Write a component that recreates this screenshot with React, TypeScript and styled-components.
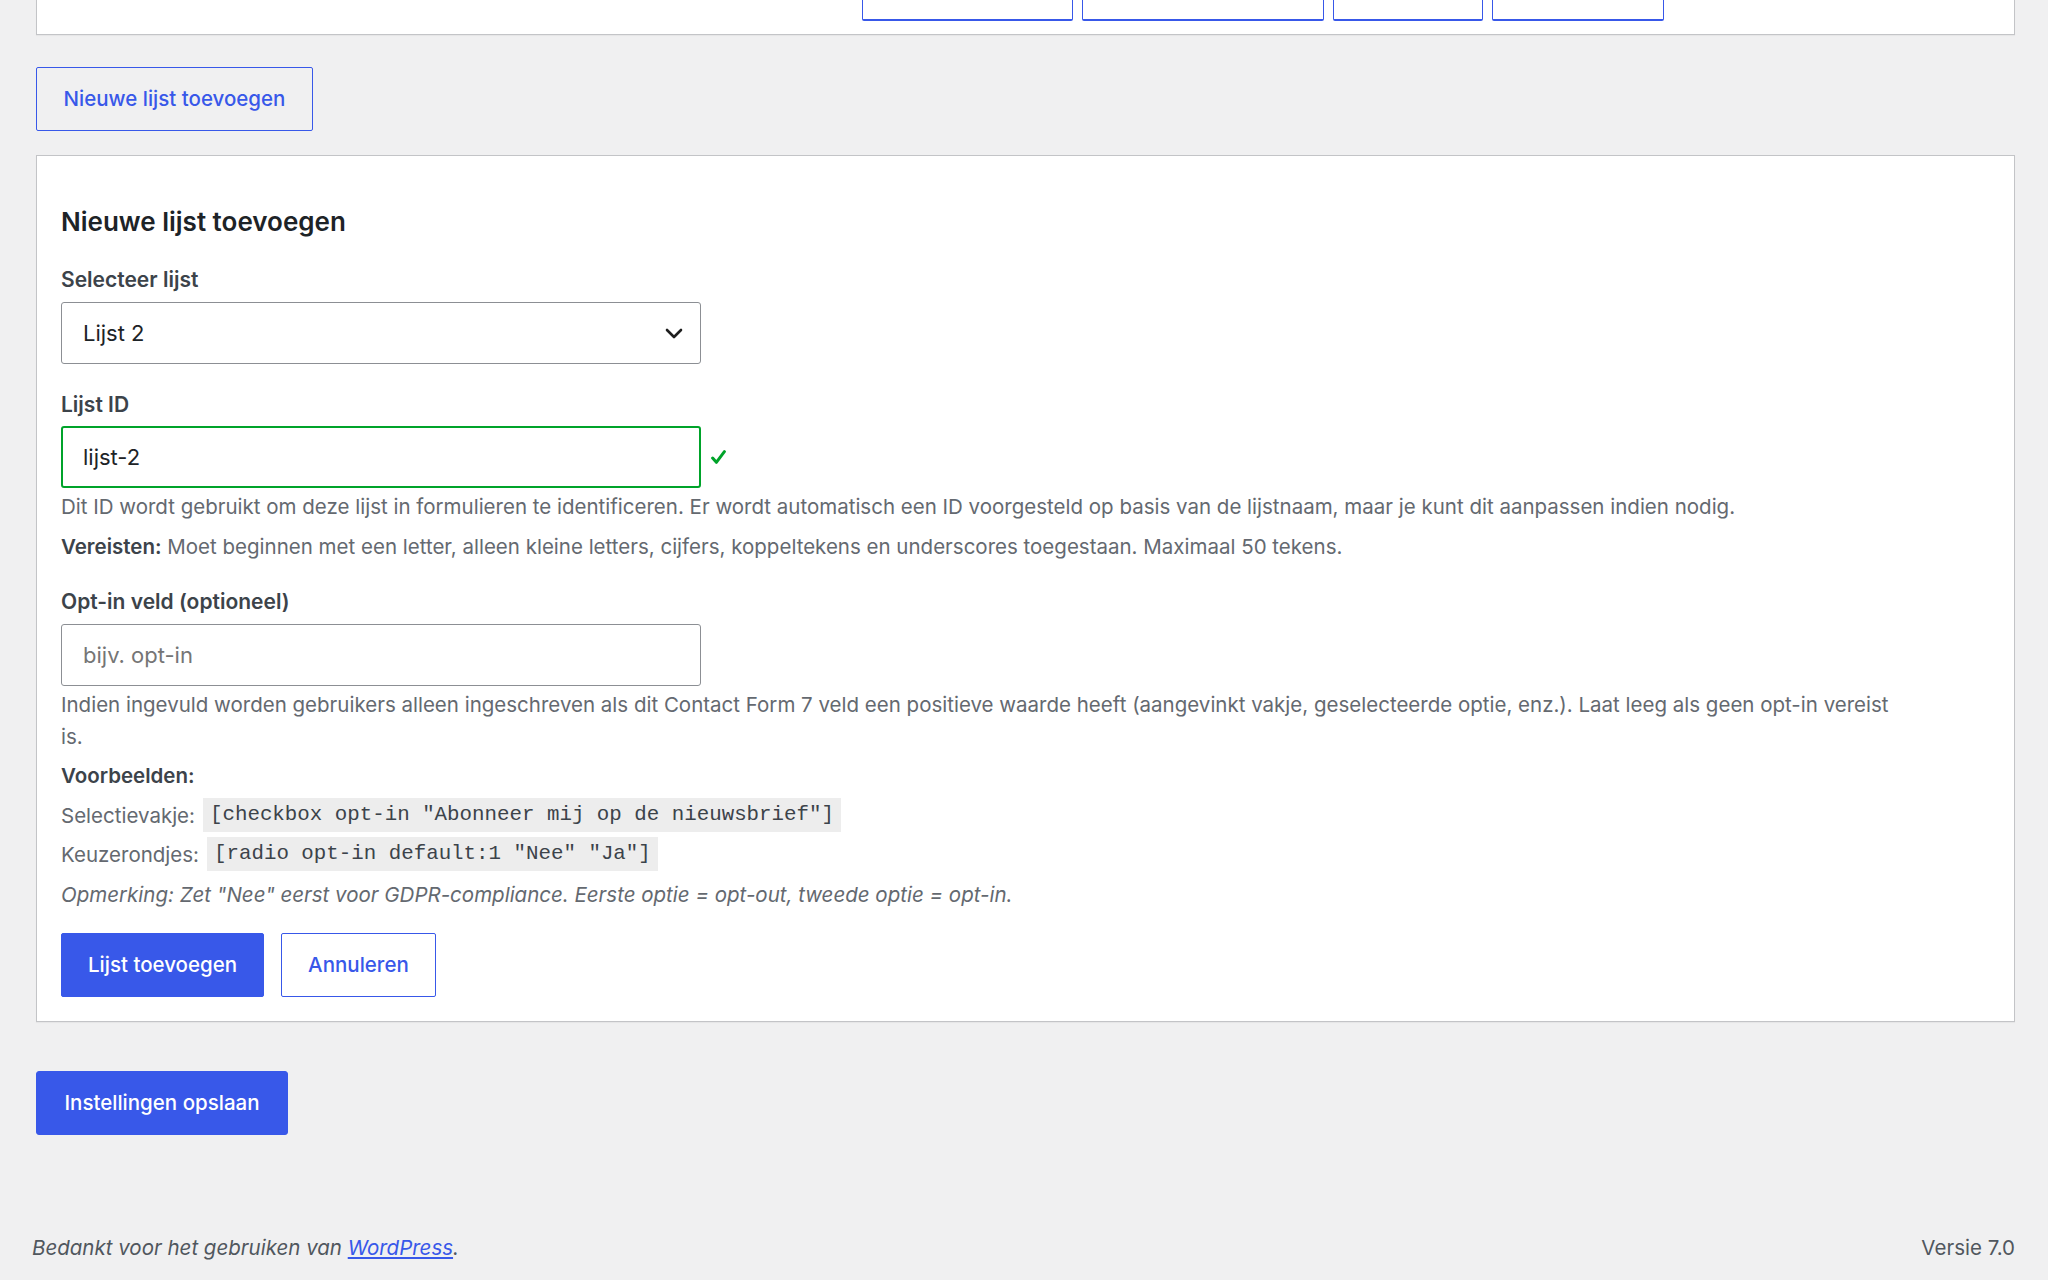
import styled, { createGlobalStyle } from "styled-components";

const GlobalStyle = createGlobalStyle`
  body {
    margin: 0;
    background: #f0f0f1;
    font-family: Inter, "Noto Sans", sans-serif;
    color: #3c434a;
  }
`;

const Page = styled.div`
  height: 1280px;
  overflow: hidden;
`;

const Wrap = styled.div`
  padding: 0 33px 0 36px;
`;

const TopPanel = styled.div`
  margin-top: -40px;
  height: 60px;
  background: #fff;
  border: 1px solid #c3c4c7;
  box-shadow: 0 1px 1px rgba(0, 0, 0, 0.04);
  display: flex;
  align-items: flex-end;
  gap: 9px;
  padding: 0 0 13px 825px;
`;

const TabStub = styled.div<{ $w: number }>`
  width: ${(p) => p.$w}px;
  height: 46px;
  box-sizing: border-box;
  background: #fff;
  border: 1px solid #3858e9;
  border-bottom-width: 2px;
  border-radius: 2px;
`;

const Button = styled.button<{ $primary?: boolean }>`
  height: 64px;
  box-sizing: border-box;
  padding: 0 26px 1px;
  font-family: Inter, "Noto Sans", sans-serif;
  font-size: 20.5px;
  font-weight: 500;
  border-radius: 2px;
  cursor: pointer;
  border: 1px solid #3858e9;
  background: ${(p) => (p.$primary ? "#3858e9" : "#fff")};
  color: ${(p) => (p.$primary ? "#fff" : "#3858e9")};
`;

const AddListButton = styled(Button)`
  margin-top: 32px;
  background: transparent;
  width: 277px;
  padding: 0 0 1px;
`;

const Panel = styled.div`
  margin-top: 24px;
  background: #fff;
  border: 1px solid #c3c4c7;
  box-shadow: 0 1px 1px rgba(0, 0, 0, 0.04);
  padding: 0 24px 24px;
`;

const Heading = styled.h2`
  margin: 50px 0 0;
  font-size: 26px;
  line-height: 32px;
  font-weight: 600;
  color: #1d2327;
`;

const Label = styled.label<{ $mt: number }>`
  display: block;
  margin-top: ${(p) => p.$mt}px;
  font-size: 21px;
  line-height: 28px;
  font-weight: 600;
  color: #3c434a;
`;

const FieldRow = styled.div<{ $mt: number }>`
  margin-top: ${(p) => p.$mt}px;
  display: flex;
  align-items: center;
  gap: 10px;
`;

const Field = styled.div<{ $valid?: boolean }>`
  width: 640px;
  height: 62px;
  box-sizing: border-box;
  border: ${(p) => (p.$valid ? "2px solid #00a32a" : "1px solid #8c8f94")};
  border-radius: 3px;
  display: flex;
  align-items: center;
  justify-content: space-between;
  padding: 0 17px 0 ${(p) => (p.$valid ? 20 : 21)}px;
  font-size: 22px;
  color: #1d2327;
  background: #fff;
`;

const Placeholder = styled.span`
  color: #757575;
`;

const Desc = styled.p<{ $mt: number; $lh?: number }>`
  margin: ${(p) => p.$mt}px 0 0;
  max-width: 1840px;
  font-size: 20.5px;
  line-height: ${(p) => p.$lh ?? 30}px;
  color: #646970;
  em {
    font-style: italic;
  }
`;

const Strong = styled.strong`
  font-weight: 600;
  color: #3c434a;
`;

const ExampleRow = styled.div<{ $mt: number }>`
  margin-top: ${(p) => p.$mt}px;
  display: flex;
  align-items: center;
  gap: 8px;
  font-size: 20.5px;
  color: #646970;
`;

const Code = styled.code`
  font-family: "Liberation Mono", "DejaVu Sans Mono", monospace;
  font-size: 20.8px;
  line-height: 34px;
  padding: 0 7px;
  background: rgba(0, 0, 0, 0.07);
  color: #3c434a;
`;

const Actions = styled.div`
  margin-top: 23px;
  display: flex;
  gap: 17px;
`;

const SaveButton = styled(Button)`
  margin-top: 49px;
  width: 252px;
  padding: 0 0 1px;
  border-radius: 3px;
`;

const Footer = styled.div`
  margin-top: 98px;
  padding: 0 33px 0 32px;
  display: flex;
  justify-content: space-between;
  font-size: 20.5px;
  line-height: 30px;
  color: #50575e;
`;

const Thanks = styled.span`
  font-style: italic;
  a {
    color: #3858e9;
  }
`;

const Chevron = () => (
  <svg width="18" height="11" viewBox="0 0 18 11" fill="none">
    <path d="M2 2l7 7 7-7" stroke="#1e1e1e" strokeWidth="2.6" strokeLinecap="round" strokeLinejoin="round" />
  </svg>
);

const Check = () => (
  <svg width="15" height="15" viewBox="0 0 14 14" fill="none">
    <path d="M1.5 7.5l3.5 4 7.5-10" stroke="#00a32a" strokeWidth="2.8" strokeLinecap="round" strokeLinejoin="round" />
  </svg>
);

export default function App() {
  return (
    <Page>
      <GlobalStyle />
      <Wrap>
        <TopPanel>
          {[211, 242, 150, 172].map((w, i) => (
            <TabStub key={i} $w={w} />
          ))}
        </TopPanel>

        <AddListButton>Nieuwe lijst toevoegen</AddListButton>

        <Panel>
          <Heading>Nieuwe lijst toevoegen</Heading>

          <Label $mt={28}>Selecteer lijst</Label>
          <FieldRow $mt={8}>
            <Field>
              <span>Lijst 2</span>
              <Chevron />
            </Field>
          </FieldRow>

          <Label $mt={27}>Lijst ID</Label>
          <FieldRow $mt={7}>
            <Field $valid>
              <span>lijst-2</span>
            </Field>
            <Check />
          </FieldRow>
          <Desc $mt={4}>
            Dit ID wordt gebruikt om deze lijst in formulieren te identificeren. Er wordt automatisch een ID voorgesteld op basis van de lijstnaam, maar je kunt dit aanpassen indien nodig.
          </Desc>
          <Desc $mt={10}>
            <Strong>Vereisten:</Strong> Moet beginnen met een letter, alleen kleine letters, cijfers, koppeltekens en underscores toegestaan. Maximaal 50 tekens.
          </Desc>

          <Label $mt={26}>Opt-in veld (optioneel)</Label>
          <FieldRow $mt={8}>
            <Field>
              <Placeholder>bijv. opt-in</Placeholder>
            </Field>
          </FieldRow>
          <Desc $mt={3} $lh={32}>
            Indien ingevuld worden gebruikers alleen ingeschreven als dit Contact Form 7 veld een positieve waarde heeft (aangevinkt vakje, geselecteerde optie, enz.). Laat leeg als geen opt-in vereist is.
          </Desc>
          <Desc $mt={8}>
            <Strong>Voorbeelden:</Strong>
          </Desc>
          <ExampleRow $mt={7}>
            Selectievakje: <Code>[checkbox opt-in "Abonneer mij op de nieuwsbrief"]</Code>
          </ExampleRow>
          <ExampleRow $mt={5}>
            Keuzerondjes: <Code>[radio opt-in default:1 "Nee" "Ja"]</Code>
          </ExampleRow>
          <Desc $mt={9}>
            <em>Opmerking: Zet "Nee" eerst voor GDPR-compliance. Eerste optie = opt-out, tweede optie = opt-in.</em>
          </Desc>

          <Actions>
            <Button $primary>Lijst toevoegen</Button>
            <Button>Annuleren</Button>
          </Actions>
        </Panel>

        <SaveButton $primary>Instellingen opslaan</SaveButton>
      </Wrap>

      <Footer>
        <Thanks>
          Bedankt voor het gebruiken van <a href="#">WordPress</a>.
        </Thanks>
        <span>Versie 7.0</span>
      </Footer>
    </Page>
  );
}
